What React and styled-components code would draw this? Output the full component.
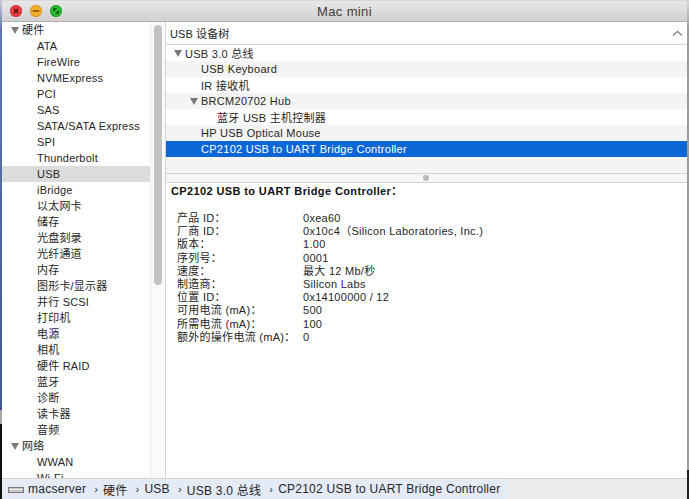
import React from 'react';
import styled, { createGlobalStyle } from 'styled-components';

const sidebarTop = ['ATA', 'FireWire', 'NVMExpress', 'PCI', 'SAS', 'SATA/SATA Express', 'SPI', 'Thunderbolt', 'USB', 'iBridge', '以太网卡', '储存', '光盘刻录', '光纤通道', '内存', '图形卡/显示器', '并行 SCSI', '打印机', '电源', '相机', '硬件 RAID', '蓝牙', '诊断', '读卡器', '音频'];

const treeRows = [
  { label: 'USB 3.0 总线', depth: 0, open: true },
  { label: 'USB Keyboard', depth: 1 },
  { label: 'IR 接收机', depth: 1 },
  { label: 'BRCM20702 Hub', depth: 1, open: true },
  { label: '蓝牙 USB 主机控制器', depth: 2 },
  { label: 'HP USB Optical Mouse', depth: 1 },
  { label: 'CP2102 USB to UART Bridge Controller', depth: 1, selected: true },
  { label: '', depth: 1 },
];

const details = [
  ['产品 ID：', '0xea60'],
  ['厂商 ID：', '0x10c4（Silicon Laboratories, Inc.)'],
  ['版本：', '1.00'],
  ['序列号：', '0001'],
  ['速度：', '最大 12 Mb/秒'],
  ['制造商：', 'Silicon Labs'],
  ['位置 ID：', '0x14100000 / 12'],
  ['可用电流 (mA)：', '500'],
  ['所需电流 (mA)：', '100'],
  ['额外的操作电流 (mA)：', '0'],
];

const crumbs = ['硬件', 'USB', 'USB 3.0 总线', 'CP2102 USB to UART Bridge Controller'];

const Global = createGlobalStyle`
  html, body { margin: 0; padding: 0; height: 100%; background: #3d4048; overflow: hidden; }
  body { font-family: "Liberation Sans", "Noto Sans CJK SC", sans-serif; font-size: 11px; color: #262626; }
`;

// the desktop only shows as a thin strip on each side of the window
const Desktop = styled.div`
  width: 689px;
  height: 499px;
  padding: 1px 2px 0 2px;
  box-sizing: border-box;
  background-color: #d8d8d8;
  background-repeat: no-repeat;
  background-size: 2px 100%;
  background-position: left top, right top;
  background-image:
    linear-gradient(#c9ccd4 0, #5f78aa 30px, #3d5a96 410px, #a8a8a8 410px, #a8a8a8 424px, #111 424px),
    linear-gradient(#dcdcdc 0, #9c9c9c 30px, #9c9c9c 470px, #222 470px);
`;

const Window = styled.div`
  width: 685px;
  height: 498px;
  display: flex;
  flex-direction: column;
  background: #fff;
  border-radius: 5px 5px 3px 3px;
  overflow: hidden;
`;

const TitleBar = styled.div`
  height: 20px;
  flex: none;
  position: relative;
  display: flex;
  align-items: center;
  justify-content: center;
  background: linear-gradient(#e9e8e9, #d2d0d2);
  border-bottom: 1px solid #b1afb1;
  font-size: 13px;
  letter-spacing: 0.35px;
  color: #3c3c3c;
`;

const Lights = styled.div`
  position: absolute;
  left: 8px;
  top: 4px;
  display: flex;
  gap: 8px;
`;

const Light = styled.span`
  width: 12px;
  height: 12px;
  border-radius: 50%;
  background: ${p => p.$color};
  box-shadow: inset 0 0 0 1px ${p => p.$edge};
  display: flex;
  svg { display: block; }
`;

const Body = styled.div`
  flex: 1;
  min-height: 0;
  display: flex;
`;

const Sidebar = styled.div`
  width: 148px;
  flex: none;
  overflow: hidden;
  letter-spacing: 0.2px;
`;

const SideRow = styled.div`
  height: 16px;
  line-height: 16px;
  white-space: nowrap;
  display: flex;
  align-items: center;
  padding-left: ${p => (p.$group ? 9 : 35)}px;
  background: ${p => (p.$active ? '#dcdcdc' : 'transparent')};
`;

const Triangle = styled.span`
  width: 0;
  height: 0;
  flex: none;
  margin-right: 3px;
  border-left: 4px solid transparent;
  border-right: 4px solid transparent;
  border-top: 7px solid #7a7a7a;
`;

const ScrollTrack = styled.div`
  width: 16px;
  flex: none;
  box-sizing: border-box;
  background: #fafafa;
  border-left: 1px solid #ededed;
  border-right: 1px solid #d4d4d4;
  padding: 3px 3px 0 3px;
`;

const ScrollThumb = styled.div`
  height: 260px;
  border-radius: 4px;
  background: #c2c2c2;
`;

const Main = styled.div`
  flex: 1;
  min-width: 0;
  display: flex;
  flex-direction: column;
  letter-spacing: 0.28px;
`;

const TreeHeader = styled.div`
  height: 22px;
  flex: none;
  display: flex;
  align-items: center;
  justify-content: space-between;
  padding: 0 4px;
  letter-spacing: 0.1px;
  border-bottom: 1px solid #d4d4d4;
`;

const TreeList = styled.div`
  flex: none;
`;

const TreeRow = styled.div`
  height: 16px;
  display: flex;
  align-items: center;
  white-space: nowrap;
  padding-left: ${p => 35 + (p.$depth - 1) * 16}px;
  background: ${p => (p.$selected ? '#0d66d6' : p.$odd ? '#f4f4f4' : '#fff')};
  color: ${p => (p.$selected ? '#fff' : '#262626')};
`;

const TreeTriangle = styled(Triangle)`
  margin-left: -11px;
  margin-right: 3px;
  border-left-width: 4.5px;
  border-right-width: 4.5px;
`;

const Splitter = styled.div`
  height: 8px;
  flex: none;
  display: flex;
  align-items: center;
  justify-content: center;
  background: #f6f6f6;
  border-top: 1px solid #d4d4d4;
  border-bottom: 1px solid #d4d4d4;
`;

const Dot = styled.span`
  width: 6px;
  height: 6px;
  margin-right: 2px;
  border-radius: 50%;
  background: #b9b9b9;
`;

const Detail = styled.div`
  flex: 1;
  min-height: 0;
  padding: 1px 5px 0;
`;

const DetailTitle = styled.div`
  font-weight: 700;
  height: 15px;
  line-height: 15px;
  margin-bottom: 13px;
  letter-spacing: 0.38px;
  color: #111;
`;

const DetailGrid = styled.div`
  display: grid;
  grid-template-columns: 126px 1fr;
  padding-left: 6px;
  grid-auto-rows: 13.2px;
  line-height: 13px;
`;

const PathBar = styled.div`
  height: 21px;
  flex: none;
  display: flex;
  background: #ececec;
  border-top: 1px solid #d4d4d4;
  box-sizing: border-box;
`;

const PathInner = styled.div`
  display: flex;
  align-items: center;
  padding: 0 8px 0 6px;
  background: #e4eaf6;
  white-space: nowrap;
  font-size: 12px;
  letter-spacing: 0.24px;
`;

const Disk = styled.svg`
  margin: 2px 4px 0 0;
`;

const Sep = styled.span`
  margin: 0 5px 0 8px;
  font-size: 11px;
  color: #333;
`;

const Chevron = () => (
  <svg width="11" height="7" viewBox="0 0 11 7">
    <path d="M1 5.5 L5.5 1.5 L10 5.5" fill="none" stroke="#8a8a8a" strokeWidth="1.5" />
  </svg>
);

export default function App() {
  return (
    <Desktop>
      <Global />
      <Window>
        <TitleBar>
          <Lights>
            <Light $color="#f0424a" $edge="#d8333a">
              <svg width="12" height="12" viewBox="0 0 12 12"><path d="M3.8 3.8 L8.2 8.2 M8.2 3.8 L3.8 8.2" stroke="#5c0a0c" strokeWidth="1.5" /></svg>
            </Light>
            <Light $color="#f4ae2b" $edge="#d99720">
              <svg width="12" height="12" viewBox="0 0 12 12"><path d="M2.8 6 H9.2" stroke="#7a4a05" strokeWidth="1.5" /></svg>
            </Light>
            <Light $color="#2dbb36" $edge="#22a02c">
              <svg width="12" height="12" viewBox="0 0 12 12"><path d="M3.2 3.2 H7 L3.2 7 Z M8.8 8.8 H5 L8.8 5 Z" fill="#0a4f10" /></svg>
            </Light>
          </Lights>
          Mac mini
        </TitleBar>
        <Body>
          <Sidebar>
            <SideRow $group><Triangle />硬件</SideRow>
            {sidebarTop.map(name => (
              <SideRow key={name} $active={name === 'USB'}>{name}</SideRow>
            ))}
            <SideRow $group><Triangle />网络</SideRow>
            <SideRow>WWAN</SideRow>
            <SideRow>Wi-Fi</SideRow>
          </Sidebar>
          <ScrollTrack><ScrollThumb /></ScrollTrack>
          <Main>
            <TreeHeader>USB 设备树<Chevron /></TreeHeader>
            <TreeList>
              {treeRows.map((row, i) => (
                <TreeRow key={i} $depth={row.depth} $odd={i % 2 === 1} $selected={row.selected}>
                  {row.open && <TreeTriangle />}
                  {row.label}
                </TreeRow>
              ))}
            </TreeList>
            <Splitter><Dot /></Splitter>
            <Detail>
              <DetailTitle>CP2102 USB to UART Bridge Controller：</DetailTitle>
              <DetailGrid>
                {details.map(([k, v]) => (
                  <React.Fragment key={k}>
                    <span>{k}</span>
                    <span>{v}</span>
                  </React.Fragment>
                ))}
              </DetailGrid>
            </Detail>
          </Main>
        </Body>
        <PathBar>
          <PathInner>
            <Disk width="16" height="6" viewBox="0 0 16 6">
              <rect x="0.5" y="0.5" width="15" height="5" fill="#c9c9c9" stroke="#777" />
              <rect x="2" y="2" width="12" height="1" fill="#eee" />
            </Disk>
            macserver
            {crumbs.map(c => (
              <React.Fragment key={c}>
                <Sep>›</Sep>{c}
              </React.Fragment>
            ))}
          </PathInner>
        </PathBar>
      </Window>
    </Desktop>
  );
}
